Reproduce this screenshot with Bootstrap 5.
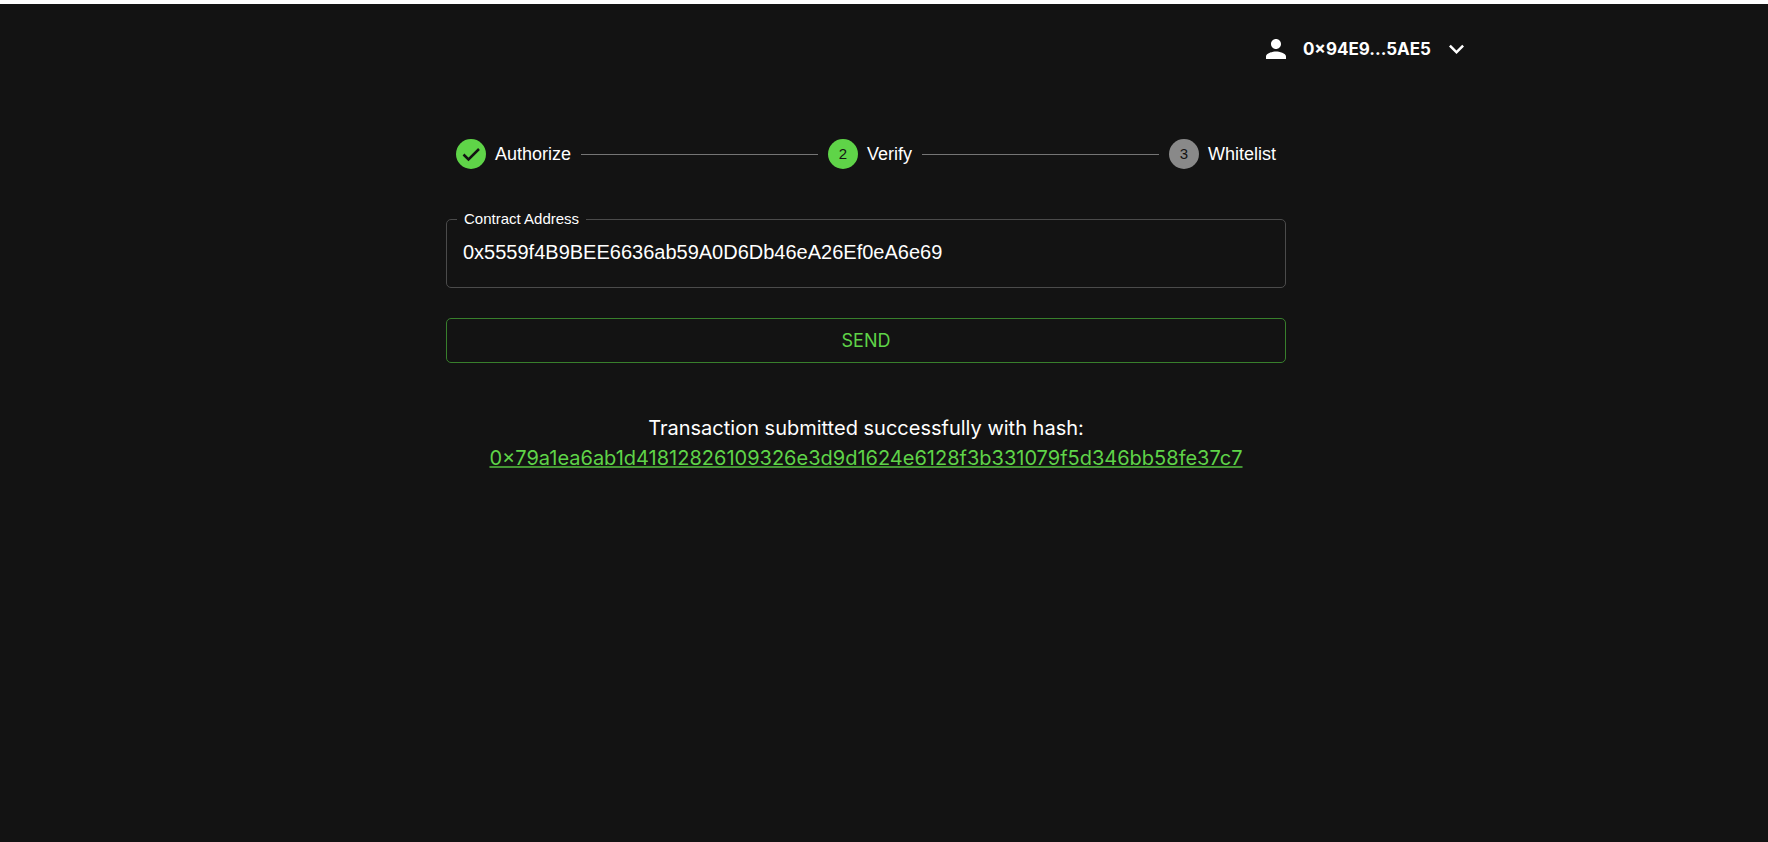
<!DOCTYPE html>
<html lang="en">
<head>
<meta charset="utf-8">
<meta name="viewport" content="width=device-width, initial-scale=1">
<title>Contract whitelist</title>
<link rel="stylesheet" href="https://cdn.jsdelivr.net/npm/bootstrap@5.3.0/dist/css/bootstrap.min.css">
<style>
  :root { --green: #5fd448; --surface: #131313; }
  body {
    background: var(--surface);
    color: #fff;
    font-family: Inter, "Liberation Sans", sans-serif;
    border-top: 4px solid #fff;
    min-height: 100vh;
    padding-right: 36px;
  }
  .shell { max-width: 1200px; }
  .topbar { padding-top: 30px; }
  .flow { max-width: 840px; margin-top: 75px; }
  .account { color: #fff; font-size: 17px; font-weight: 700; line-height: 30px; gap: 12px; }
  .account:hover { color: var(--green); }
  .account .chevron { margin-left: 6px; }

  .stepper { font: 18px/30px "Liberation Sans", Arial, sans-serif; gap: 10px; padding: 0 10px; }
  .step-item { gap: 9px; }
  .step-dot {
    width: 30px; height: 30px; border-radius: 50%;
    background: var(--green); color: var(--surface); font-size: 15px;
  }
  .step-dot.pending { background: #898989; }
  .step-line { border-top: 1px solid #757575; }

  .field {
    border: 1px solid #4b4b4b; border-radius: 5px;
    font-family: "Liberation Sans", Arial, sans-serif;
    margin-top: 40px; padding: 0 10px 20px; min-width: 0;
  }
  .field legend { float: none; width: auto; margin: -10px 0 0; padding: 0 7px; font-size: 15px; line-height: 20px; }
  .field input {
    width: 100%; border: 0; background: transparent; color: #fff;
    font-size: 20px; line-height: 30px; padding: 0 6px; margin-top: 8px; outline: 0;
  }
  .send { --bs-btn-color: var(--green); --bs-btn-border-color: #387f2c; --bs-btn-border-radius: 5px;
    --bs-btn-hover-color: var(--green); --bs-btn-hover-border-color: var(--green);
    font-size: 18px; line-height: 31px; margin-top: 30px; }
  .result { font-size: 20px; line-height: 30px; margin-top: 50px; }
  .result a { color: var(--green); overflow-wrap: anywhere; text-decoration-color: #449534; text-decoration-thickness: 2px; }
</style>
</head>
<body>
<div class="shell container-fluid p-0">
  <header class="topbar d-flex justify-content-end">
    <button type="button" class="account btn border-0 p-0 d-flex align-items-center" aria-haspopup="true">
      <svg width="30" height="30" viewBox="0 0 24 24" fill="currentColor" aria-hidden="true"><path d="M12 12c2.210 0 4-1.790 4-4s-1.790-4-4-4-4 1.790-4 4 1.790 4 4 4zm0 2c-2.670 0-8 1.340-8 4v2h16v-2c0-2.660-5.330-4-8-4z"/></svg>
      <span>0×94E9...5AE5</span>
      <svg class="chevron" width="17" height="30" viewBox="6 0 13.600 24" fill="currentColor" aria-hidden="true"><path d="M7.410 8.590 12 13.170l4.590-4.580L18 10l-6 6-6-6z"/></svg>
    </button>
  </header>
  <main class="flow mx-auto">
    <ol class="stepper list-unstyled d-flex align-items-center mb-0">
      <li class="step-item d-flex align-items-center">
        <span class="step-dot d-flex align-items-center justify-content-center"><svg width="20" height="20" viewBox="0 0 20 20" fill="none" stroke="currentColor" stroke-width="2.500" aria-label="Completed"><path d="M2.500 10.500 7.500 15.500 18 5"/></svg></span>
        <span>Authorize</span>
      </li>
      <li class="step-line flex-fill" aria-hidden="true"></li>
      <li class="step-item d-flex align-items-center" aria-current="step">
        <span class="step-dot d-flex align-items-center justify-content-center">2</span>
        <span>Verify</span>
      </li>
      <li class="step-line flex-fill" aria-hidden="true"></li>
      <li class="step-item d-flex align-items-center">
        <span class="step-dot pending d-flex align-items-center justify-content-center">3</span>
        <span>Whitelist</span>
      </li>
    </ol>
    <form>
      <fieldset class="field">
        <legend><label for="contract">Contract Address</label></legend>
        <input id="contract" type="text" value="0x5559f4B9BEE6636ab59A0D6Db46eA26Ef0eA6e69" spellcheck="false">
      </fieldset>
      <button type="button" class="send btn w-100">SEND</button>
    </form>
    <p class="result text-center mb-0">Transaction submitted successfully with hash:<br>
      <a href="#">0×79a1ea6ab1d41812826109326e3d9d1624e6128f3b331079f5d346bb58fe37c7</a></p>
  </main>
</div>
<script src="https://cdn.jsdelivr.net/npm/bootstrap@5.3.0/dist/js/bootstrap.bundle.min.js"></script>
</body>
</html>
